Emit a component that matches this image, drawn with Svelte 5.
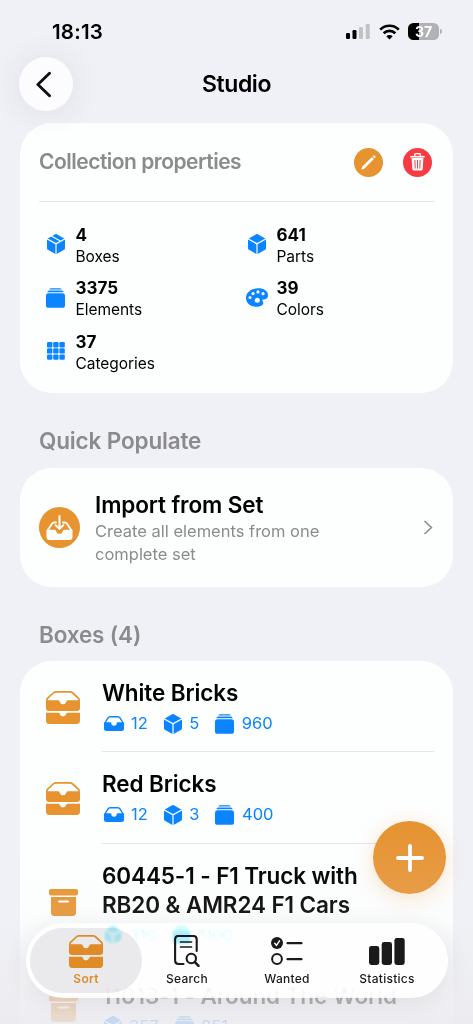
<script lang="ts">
  type Stat = { icon: string; value: number; label: string };
  type Box = { name: string; icon: string; trays?: number; parts: number; elements: number };

  const stats: Stat[] = [
    { icon: "box", value: 4, label: "Boxes" },
    { icon: "cube", value: 641, label: "Parts" },
    { icon: "stack", value: 3375, label: "Elements" },
    { icon: "palette", value: 39, label: "Colors" },
    { icon: "grid", value: 37, label: "Categories" },
  ];

  const boxes: Box[] = [
    { name: "White Bricks", icon: "drawers", trays: 12, parts: 5, elements: 960 },
    { name: "Red Bricks", icon: "drawers", trays: 12, parts: 3, elements: 400 },
    { name: "60445-1 - F1 Truck with RB20 & AMR24 F1 Cars", icon: "archive", parts: 310, elements: 1100 },
    { name: "11013-1 - Around The World", icon: "archive", parts: 357, elements: 851 },
  ];

  const tabs = [
    { id: "sort", label: "Sort", icon: "drawers" },
    { id: "search", label: "Search", icon: "search" },
    { id: "wanted", label: "Wanted", icon: "checklist" },
    { id: "statistics", label: "Statistics", icon: "bars" },
  ];

  let activeTab = $state("sort");
</script>

{#snippet icon(name: string)}
  {#if name === "cube" || name === "box"}
    <svg class="icon {name}" viewBox="0 0 18 20" width="18" height="20" fill="currentColor">
      <path d="M8.2.3a1.8 1.8 0 0 1 1.6 0l7.5 4.1L9 9 .7 4.4z" />
      <path d="M0 5.6l8.4 4.7V20L.9 15.8A1.7 1.7 0 0 1 0 14.3z" />
      <path d="M18 5.6l-8.4 4.7V20l7.5-4.2a1.7 1.7 0 0 0 .9-1.5z" />
      {#if name === "box"}
        <path d="M4.3 2.1l9 5" stroke="#fff" stroke-width="1.2" fill="none" />
      {/if}
    </svg>
  {:else if name === "stack"}
    <svg class="icon stack" viewBox="0 0 19 20" width="19" height="20" fill="currentColor">
      <rect y="5.2" width="19" height="14.6" rx="2.6" />
      <path d="M1.3 4.2Q1.7 2.6 3.3 2.6H15.7Q17.3 2.6 17.7 4.2z" />
      <path d="M3.4 1.5Q3.8.2 5 .2H14Q15.2.2 15.6 1.5z" />
    </svg>
  {:else if name === "grid"}
    <svg class="icon" viewBox="0 0 18 18" width="18" height="18" fill="currentColor">
      {#each [0, 6.2, 12.4] as y}
        {#each [0, 6.2, 12.4] as x}
          <rect {x} {y} width="5.4" height="5.4" rx="1.2" />
        {/each}
      {/each}
    </svg>
  {:else if name === "palette"}
    <svg class="icon" viewBox="0 0 22 19" width="22" height="19">
      <path
        d="M12 .3C5 .3 0 4.500 0 10c0 5 4.500 8.700 10.300 8.700 4.200 0 7-1.600 7-3.700 0-1.200-.9-1.700-.9-2.500 0-1 1-1 2.600-1.200 2-.3 3-1.700 3-4C22 3 18 .3 12 .3z"
        fill="currentColor"
      />
      <g fill="#fff">
        <circle cx="4" cy="9.5" r="1.5" />
        <circle cx="7" cy="5.6" r="1.6" />
        <circle cx="12" cy="3.9" r="1.6" />
        <circle cx="17" cy="5.7" r="1.6" />
        <circle cx="11.3" cy="12.3" r="2.5" />
      </g>
    </svg>
  {:else if name === "tray"}
    <svg class="icon" viewBox="0 0 20 15" width="20" height="15">
      <path d="M.9 7L4 2Q4.8.8 6 .8h8Q15.2.8 16 2l3.1 5" fill="none" stroke="currentColor" stroke-width="1.4" />
      <path
        d="M0 7q0-.8.8-.8h5.7q.7 0 .8.8a2.7 2.7 0 0 0 5.4 0q.1-.8.8-.8h5.7q.8 0 .8.8v5.5Q20 15 17.5 15h-15Q0 15 0 12.5z"
        fill="currentColor"
      />
    </svg>
  {:else if name === "drawers"}
    <svg class="icon" viewBox="0 0 34 33" width="34" height="33">
      <path
        d="M.9 10.5V9Q.9 8 1.7 7.2L7.3 2Q8.5.9 10 .9H24Q25.5.9 26.7 2l5.6 5.2q.8.8.8 1.8v1.5"
        fill="none"
        stroke="currentColor"
        stroke-width="1.7"
      />
      <path
        d="M0 9.2q5 0 12 0q1.400 0 1.600 1.400a3.500 3.500 0 0 0 6.800 0Q20.600 9.200 22 9.200h12V17q0 3-3 3H3q-3 0-3-3z"
        fill="currentColor"
      />
      <path
        d="M0 21.700h12.500q1 0 1.300 1.300a3.300 3.300 0 0 0 6.400 0q.3-1.300 1.300-1.300H34V29.500Q34 33 30.500 33h-27Q0 33 0 29.500z"
        fill="currentColor"
      />
    </svg>
  {:else if name === "archive"}
    <svg class="icon archive" viewBox="0 0 29 27" width="29" height="27">
      <rect width="29" height="6.5" rx="1.9" fill="currentColor" />
      <path d="M2 8h25v15.500q0 3.500-3.500 3.500h-18Q2 27 2 23.500z" fill="currentColor" />
      <path d="M10 12.500h9" stroke="#fff" stroke-width="1.9" stroke-linecap="round" />
    </svg>
  {:else if name === "search"}
    <svg class="icon" viewBox="0 0 26 32" width="26" height="32" fill="none" stroke="currentColor" stroke-width="2.1" stroke-linecap="round">
      <path d="M9.500 29H4.500Q1.100 29 1.100 25.600V4.400Q1.100 1 4.500 1h14.800q3.400 0 3.400 3.400V16" />
      <path d="M6.500 7h11M6.500 12h11" stroke-width="1.7" />
      <circle cx="17.3" cy="23.5" r="4.7" />
      <path d="M20.900 27.200l3.600 3.600" stroke-width="2.5" />
    </svg>
  {:else if name === "checklist"}
    <svg class="icon" viewBox="0 0 32 28" width="32" height="28" fill="none" stroke="currentColor" stroke-linecap="round">
      <circle cx="6" cy="6" r="6" fill="currentColor" stroke="none" />
      <path d="M3.700 6.300l1.800 2 3-4.500" stroke="#fff" stroke-width="1.4" />
      <circle cx="6" cy="22" r="4.9" stroke-width="2" />
      <path d="M16.500 6.200H30.500M16.500 22.200H30.500" stroke-width="2.2" />
    </svg>
  {:else if name === "bars"}
    <svg class="icon" viewBox="0 0 36 27" width="36" height="27" fill="currentColor">
      <rect y="8" width="10.3" height="19" rx="2.4" />
      <rect x="12.7" y="4" width="10.3" height="23" rx="2.4" />
      <rect x="25.4" width="10.3" height="27" rx="2.4" />
    </svg>
  {/if}
{/snippet}

<div class="screen">
  <div class="status">
    <span class="time">18:13</span>
    <div class="indicators">
      <svg width="24" height="15" viewBox="0 0 24 15">
        <rect x="0" y="9" width="4" height="6" rx="1.2" />
        <rect x="6.5" y="6" width="4" height="9" rx="1.2" />
        <rect x="13" y="3" width="4" height="12" rx="1.2" fill="#c2c2c5" />
        <rect x="19.7" y="0" width="4" height="15" rx="1.2" fill="#c2c2c5" />
      </svg>
      <svg class="wifi" width="21" height="16" viewBox="0 0 21 16" fill="none" stroke="#000" stroke-width="2.7">
        <path d="M1.200 5.600a13.200 13.200 0 0 1 18.600 0" />
        <path d="M4.700 9.300a8.200 8.200 0 0 1 11.600 0" />
        <path d="M10.500 15.600L7.300 12.300a4.500 4.500 0 0 1 6.400 0z" fill="#000" stroke="none" />
      </svg>
      <div class="battery">37</div>
      <i class="nub"></i>
    </div>
  </div>

  <header>
    <button class="back" aria-label="Back">
      <svg width="16" height="27" viewBox="0 0 16 27" fill="none" stroke="#111" stroke-width="2.9" stroke-linecap="round" stroke-linejoin="round">
        <path d="M13.500 2.300L1.900 13.500 13.500 24.700" />
      </svg>
    </button>
    <h1>Studio</h1>
  </header>

  <section class="card properties">
    <div class="card-head">
      <h2>Collection properties</h2>
      <button class="round edit" aria-label="Edit">
        <svg width="15" height="15" viewBox="0 0 15 15" fill="#fff">
          <path d="M.3 14.700l1.100-3.200L11 2l1.900 1.900L3.500 13.500z" />
          <path d="M11.700 1.300l.9-.8q.5-.3 1 .1l.8.8q.4.500.1 1l-.8.900z" />
        </svg>
      </button>
      <button class="round delete" aria-label="Delete">
        <svg width="15" height="18" viewBox="0 0 15 18" fill="none" stroke="#fff">
          <path d="M4.700 3V1.500q0-.8.8-.8h4q.8 0 .8.800V3" stroke-width="1.3" />
          <path d="M.3 3.700h14.400" stroke-width="1.6" />
          <path d="M1.600 5h11.800l-.7 11q-.1 1.600-1.700 1.600H4Q2.400 17.600 2.300 16z" fill="#fff" stroke="none" />
          <path d="M4.900 7l.3 8.500M7.500 7v8.500M10.100 7l-.3 8.500" stroke="#f63c42" stroke-width="1" />
        </svg>
      </button>
    </div>
    <div class="stats">
      {#each stats as stat}
        <div class="stat">
          <span class="stat-icon">{@render icon(stat.icon)}</span>
          <div>
            <strong>{stat.value}</strong>
            <span class="label">{stat.label}</span>
          </div>
        </div>
      {/each}
    </div>
  </section>

  <h2 class="populate-title">Quick Populate</h2>
  <section class="card import">
    <span class="import-icon">
      <svg width="27" height="26" viewBox="0 0 27 26" fill="none">
        <path
          d="M10 7.500H8.200Q6.800 7.500 6 8.700L1.500 15.500M17 7.500h1.800q1.400 0 2.200 1.200l4.500 6.800"
          stroke="#fff"
          stroke-width="1.9"
          stroke-linecap="round"
        />
        <path d="M.5 16q0-1.200 1.200-1.200H9q.8 0 1 1a3.600 3.600 0 0 0 7 0q.2-1 1-1h7.300q1.200 0 1.200 1.200v6q0 3-3 3h-20q-3 0-3-3z" fill="#fff" />
        <path d="M13.500 14v4.500" stroke="#e69330" stroke-width="4.500" />
        <path d="M13.500 1v12.500M9.700 10.200l3.800 3.700 3.800-3.700" stroke="#fff" stroke-width="2" stroke-linecap="round" stroke-linejoin="round" />
      </svg>
    </span>
    <div class="import-text">
      <h3>Import from Set</h3>
      <p>Create all elements from one<br />complete set</p>
    </div>
    <svg class="chevron" width="9" height="15" viewBox="0 0 9 15" fill="none" stroke="#8b8b8e" stroke-width="1.7" stroke-linecap="round" stroke-linejoin="round">
      <path d="M1 1.500l6.500 6L1 13.500" />
    </svg>
  </section>

  <h2 class="boxes-title">Boxes ({boxes.length})</h2>
  <section class="card list">
    {#each boxes as box}
      <div class="row">
        <span class="row-icon">{@render icon(box.icon)}</span>
        <div class="row-body">
          <h3>{box.name}</h3>
          <div class="meta">
            {#if box.trays}
              <span>{@render icon("tray")}{box.trays}</span>
            {/if}
            <span>{@render icon("cube")}{box.parts}</span>
            <span>{@render icon("stack")}{box.elements}</span>
          </div>
        </div>
      </div>
    {/each}
  </section>

  <div class="fade"></div>

  <button class="add" aria-label="Add box">
    <svg width="28" height="28" viewBox="0 0 28 28" stroke="#fff" stroke-width="3.8" stroke-linecap="round">
      <path d="M14 2v24M2 14h24" />
    </svg>
  </button>

  <nav>
    {#each tabs as tab}
      <button class="tab" class:active={activeTab === tab.id} onclick={() => (activeTab = tab.id)}>
        <span class="tab-icon">{@render icon(tab.icon)}</span>
        <span>{tab.label}</span>
      </button>
    {/each}
  </nav>
</div>

<style>
  :global(body) {
    margin: 0;
    background: #f0f1f6;
  }
  .screen {
    position: relative;
    height: 1024px;
    overflow: hidden;
    box-sizing: border-box;
    padding: 0 20px;
    background: #f0f1f6;
    font-family: Inter, "Liberation Sans", sans-serif;
    color: #000;
  }
  button {
    border: none;
    padding: 0;
    font-family: inherit;
  }
  h1,
  h2,
  h3,
  p {
    margin: 0;
  }
  svg {
    display: block;
    flex: none;
  }

  .status {
    display: flex;
    justify-content: space-between;
    align-items: center;
    height: 57px;
    padding: 6px 11px 0 32px;
    box-sizing: border-box;
  }
  .time {
    font-size: 20.5px;
    font-weight: 600;
    letter-spacing: 0.2px;
  }
  .indicators {
    display: flex;
    align-items: center;
  }
  .wifi {
    margin-left: 9px;
  }
  .battery {
    width: 31px;
    height: 17px;
    margin-left: 8px;
    border-radius: 5.5px;
    background: linear-gradient(90deg, #000 37%, #b2b2b4 37%);
    color: #fff;
    font-size: 14px;
    font-weight: 700;
    line-height: 17px;
    text-align: center;
  }
  .nub {
    width: 2px;
    height: 5px;
    margin-left: 1px;
    border-radius: 0 2px 2px 0;
    background: #b2b2b4;
  }

  header {
    display: flex;
    align-items: center;
    height: 54px;
    margin-bottom: 12px;
  }
  .back {
    display: grid;
    place-items: center;
    width: 54px;
    height: 54px;
    margin-left: -1px;
    padding-right: 4px;
    border-radius: 50%;
    background: #fcfcff;
    box-shadow: 0 2px 26px 8px rgba(60, 50, 70, 0.05);
  }
  h1 {
    flex: 1;
    padding-right: 53px;
    text-align: center;
    font-size: 23px;
    font-weight: 600;
    letter-spacing: -0.4px;
  }

  .card {
    border-radius: 32px;
    background: #fdfefe;
  }
  h2 {
    color: #8b8b8e;
    font-size: 22.5px;
    font-weight: 600;
    line-height: 28px;
    letter-spacing: -0.15px;
  }

  .properties {
    height: 270px;
    padding: 0 19px;
    box-sizing: border-box;
  }
  .card-head {
    display: flex;
    align-items: center;
    height: 79px;
    box-sizing: border-box;
    padding-right: 2px;
    border-bottom: 1px solid #e2e4e7;
  }
  .card-head h2 {
    flex: 1;
    font-size: 21px;
    letter-spacing: -0.5px;
  }
  .round {
    display: grid;
    place-items: center;
    width: 29px;
    height: 29px;
    border-radius: 50%;
  }
  .edit {
    margin-right: 20px;
    background: #e69330;
  }
  .delete {
    background: #f63c42;
  }

  .stats {
    display: grid;
    grid-template-columns: 1fr 1fr;
    grid-auto-rows: 53.5px;
    column-gap: 7px;
    padding-top: 22.5px;
  }
  .stat {
    display: flex;
  }
  .stat-icon {
    display: grid;
    place-items: center;
    width: 33px;
    height: 39px;
    margin-right: 3.5px;
    color: #0a84ff;
  }
  .stat strong,
  .stat .label {
    display: block;
    line-height: 21px;
  }
  .stat strong {
    font-size: 17px;
    font-weight: 700;
  }
  .stat .label {
    font-size: 15.5px;
    letter-spacing: -0.05px;
  }

  .populate-title,
  .boxes-title {
    padding-left: 19px;
  }
  .populate-title {
    margin-top: 34px;
    margin-bottom: 13px;
  }
  .boxes-title {
    margin-top: 34px;
    margin-bottom: 12px;
  }

  .import {
    display: flex;
    align-items: center;
    height: 119px;
    padding: 0 20px 0 19px;
    box-sizing: border-box;
  }
  .import-icon {
    display: grid;
    place-items: center;
    width: 41px;
    height: 41px;
    margin-right: 15px;
    border-radius: 50%;
    background: #e69330;
  }
  .import-text {
    flex: 1;
  }
  h3 {
    font-size: 22.5px;
    font-weight: 600;
    line-height: 29px;
    letter-spacing: -0.1px;
  }
  p {
    padding-top: 1px;
    color: #8b8b8e;
    font-size: 16.5px;
    line-height: 23px;
  }

  .row {
    display: flex;
    align-items: center;
    padding-left: 26px;
  }
  .row-icon {
    display: grid;
    place-items: center;
    width: 34px;
    margin-right: 22px;
    padding-top: 2px;
    color: #e69330;
  }
  .archive {
    margin-top: -4px;
  }
  .row-body {
    flex: 1;
    min-height: 91.5px;
    margin-right: 19px;
    padding: 17px 0 16px;
    box-sizing: border-box;
    border-bottom: 1.5px solid #e5e6ea;
  }
  .row:first-child .row-body {
    min-height: 91px;
  }
  .row-body h3 {
    max-width: 310px;
  }
  .meta {
    display: flex;
    gap: 16px;
    margin: 5px 0 0 1.5px;
    color: #0a84ff;
    font-size: 16.5px;
    line-height: 23px;
  }
  .meta span {
    display: flex;
    align-items: center;
    gap: 7.5px;
  }

  .fade {
    position: absolute;
    inset: 860px 0 0;
    background: linear-gradient(
      rgba(240, 240, 244, 0),
      rgba(240, 240, 244, 0.12) 35%,
      rgba(236, 236, 240, 0.68) 78%,
      rgba(234, 234, 239, 0.85)
    );
  }

  .add {
    position: absolute;
    left: 373px;
    top: 821px;
    display: grid;
    place-items: center;
    width: 73px;
    height: 73px;
    border-radius: 50%;
    background: linear-gradient(#e69330, #e79c47);
    box-shadow: 0 4px 20px rgba(230, 147, 48, 0.25);
  }

  nav {
    position: absolute;
    left: 26px;
    top: 923px;
    display: flex;
    width: 422px;
    height: 75px;
    padding: 5px 4px;
    box-sizing: border-box;
    border-radius: 38px;
    background: rgba(253, 253, 255, 0.65);
    backdrop-filter: blur(1.5px) brightness(1.25) saturate(1.6);
    box-shadow: 0 4px 24px rgba(40, 40, 60, 0.09);
  }
  .tab {
    display: flex;
    flex-direction: column;
    align-items: center;
    flex: none;
    width: 112px;
    padding-top: 3px;
    border-radius: 33px;
    background: none;
    color: #1a1a1a;
    font-size: 12px;
    font-weight: 500;
    line-height: 16px;
    letter-spacing: 0.25px;
  }
  .tab:not(:first-child) {
    width: 100px;
  }
  .tab:nth-child(2) {
    margin-left: -5px;
  }
  .tab-icon {
    display: grid;
    place-items: center;
    height: 38.5px;
    padding-top: 1px;
  }
  .tab.active {
    background: rgba(150, 150, 165, 0.2);
    color: #de8b28;
    font-weight: 600;
  }
</style>
